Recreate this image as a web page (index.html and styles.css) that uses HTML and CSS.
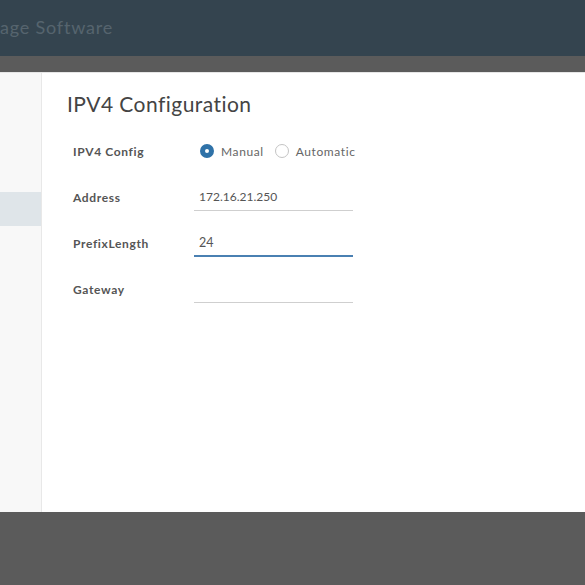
FILE: index.html
```html
<!DOCTYPE html>
<html>
<head>
<meta charset="utf-8">
<link rel="stylesheet" href="styles.css">
</head>
<body>
<header class="topbar"><span class="brand">age Software</span></header>
<div class="gap"></div>
<div class="modal">
  <aside class="sidebar">
    <div class="nav-item selected"></div>
  </aside>
  <main class="content">
    <h1 class="title">IPV4 Configuration</h1>
    <div class="form">
      <div class="label">IPV4 Config</div>
      <div class="radios">
        <span class="radio checked"></span><span class="rlabel">Manual</span>
        <span class="radio"></span><span class="rlabel">Automatic</span>
      </div>
      <div class="label">Address</div>
      <div class="input">172.16.21.250</div>
      <div class="label">PrefixLength</div>
      <div class="input focused">24</div>
      <div class="label">Gateway</div>
      <div class="input"></div>
    </div>
  </main>
</div>
</body>
</html>
```
FILE: styles.css
```css
html, body {
  margin: 0;
  padding: 0;
}
body {
  background: #5b5b5b;
  font-family: Lato, "Open Sans", sans-serif;
  width: 585px;
  height: 585px;
  overflow: hidden;
}
.topbar {
  height: 56px;
  background: #34444f;
  display: flex;
  align-items: center;
}
.brand {
  color: #56646e;
  font-size: 18px;
  letter-spacing: 0.8px;
  padding-bottom: 2px;
}
.gap {
  height: 16px;
}
.modal {
  height: 440px;
  background: #fff;
  display: flex;
  border-top: 1px solid #e6e6e6;
  box-sizing: border-box;
}
.sidebar {
  width: 41px;
  background: #f8f8f8;
  border-right: 1px solid #e8e8e8;
  padding-top: 119px;
}
.nav-item.selected {
  height: 34px;
  background: #dfe5e9;
}
.content {
  padding: 18px 0 0 25px;
}
.title {
  margin: 0;
  font-weight: normal;
  font-size: 21px;
  line-height: 26px;
  color: #444;
  letter-spacing: 0.45px;
}
.form {
  margin-top: 11px;
  margin-left: 6px;
  display: grid;
  grid-template-columns: 121px 159px;
  grid-auto-rows: 46px;
  align-items: center;
}
.label {
  font-size: 12px;
  font-weight: bold;
  color: #555;
  letter-spacing: 0.65px;
}
.radios {
  display: flex;
  align-items: center;
  padding-left: 6px;
  white-space: nowrap;
}
.radio {
  flex: none;
  width: 14px;
  height: 14px;
  border-radius: 50%;
  border: 1px solid #c4c4c4;
  box-sizing: border-box;
  background: #fff;
}
.radio.checked {
  border: 5px solid #2f72a8;
  background: #fff;
}
.rlabel {
  flex: none;
  font-size: 12px;
  color: #666;
  letter-spacing: 0.6px;
  margin: 0 11px 0 7px;
}
.input {
  height: 26px;
  box-sizing: border-box;
  border-bottom: 1px solid #cfcfcf;
  font-size: 12px;
  color: #555;
  padding: 5px 0 0 5px;
  line-height: 14px;
  margin-top: 2px;
}
.input.focused {
  border-bottom: 2px solid #4a80b2;
  padding-top: 5px;
  font-size: 12.5px;
}
```
